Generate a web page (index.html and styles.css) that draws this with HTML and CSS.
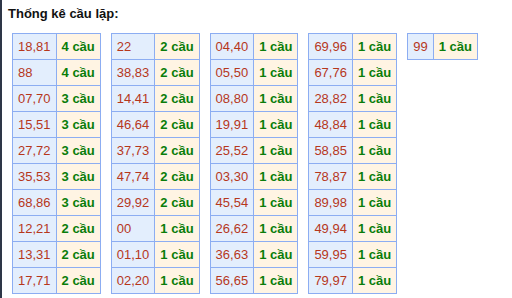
FILE: index.html
```html
<!DOCTYPE html>
<html lang="vi">
<head>
<meta charset="utf-8">
<title>Thống kê cầu lặp</title>
<link rel="stylesheet" href="styles.css">
</head>
<body>
<div class="page">
  <div class="title">Thống kê cầu lặp:</div>
  <div class="tables">
    <table class="st">
      <tr><td class="n">18,81</td><td class="c">4 cầu</td></tr>
      <tr><td class="n">88</td><td class="c">4 cầu</td></tr>
      <tr><td class="n">07,70</td><td class="c">3 cầu</td></tr>
      <tr><td class="n">15,51</td><td class="c">3 cầu</td></tr>
      <tr><td class="n">27,72</td><td class="c">3 cầu</td></tr>
      <tr><td class="n">35,53</td><td class="c">3 cầu</td></tr>
      <tr><td class="n">68,86</td><td class="c">3 cầu</td></tr>
      <tr><td class="n">12,21</td><td class="c">2 cầu</td></tr>
      <tr><td class="n">13,31</td><td class="c">2 cầu</td></tr>
      <tr><td class="n">17,71</td><td class="c">2 cầu</td></tr>
    </table>
    <table class="st">
      <tr><td class="n">22</td><td class="c">2 cầu</td></tr>
      <tr><td class="n">38,83</td><td class="c">2 cầu</td></tr>
      <tr><td class="n">14,41</td><td class="c">2 cầu</td></tr>
      <tr><td class="n">46,64</td><td class="c">2 cầu</td></tr>
      <tr><td class="n">37,73</td><td class="c">2 cầu</td></tr>
      <tr><td class="n">47,74</td><td class="c">2 cầu</td></tr>
      <tr><td class="n">29,92</td><td class="c">2 cầu</td></tr>
      <tr><td class="n">00</td><td class="c">1 cầu</td></tr>
      <tr><td class="n">01,10</td><td class="c">1 cầu</td></tr>
      <tr><td class="n">02,20</td><td class="c">1 cầu</td></tr>
    </table>
    <table class="st">
      <tr><td class="n">04,40</td><td class="c">1 cầu</td></tr>
      <tr><td class="n">05,50</td><td class="c">1 cầu</td></tr>
      <tr><td class="n">08,80</td><td class="c">1 cầu</td></tr>
      <tr><td class="n">19,91</td><td class="c">1 cầu</td></tr>
      <tr><td class="n">25,52</td><td class="c">1 cầu</td></tr>
      <tr><td class="n">03,30</td><td class="c">1 cầu</td></tr>
      <tr><td class="n">45,54</td><td class="c">1 cầu</td></tr>
      <tr><td class="n">26,62</td><td class="c">1 cầu</td></tr>
      <tr><td class="n">36,63</td><td class="c">1 cầu</td></tr>
      <tr><td class="n">56,65</td><td class="c">1 cầu</td></tr>
    </table>
    <table class="st">
      <tr><td class="n">69,96</td><td class="c">1 cầu</td></tr>
      <tr><td class="n">67,76</td><td class="c">1 cầu</td></tr>
      <tr><td class="n">28,82</td><td class="c">1 cầu</td></tr>
      <tr><td class="n">48,84</td><td class="c">1 cầu</td></tr>
      <tr><td class="n">58,85</td><td class="c">1 cầu</td></tr>
      <tr><td class="n">78,87</td><td class="c">1 cầu</td></tr>
      <tr><td class="n">89,98</td><td class="c">1 cầu</td></tr>
      <tr><td class="n">49,94</td><td class="c">1 cầu</td></tr>
      <tr><td class="n">59,95</td><td class="c">1 cầu</td></tr>
      <tr><td class="n">79,97</td><td class="c">1 cầu</td></tr>
    </table>
    <table class="st">
      <tr><td class="n">99</td><td class="c">1 cầu</td></tr>
    </table>
  </div>
</div>
</body>
</html>
```
FILE: styles.css
```css
html, body {
  margin: 0;
  padding: 0;
  background: #ffffff;
}
body {
  font-family: "Liberation Sans", Arial, sans-serif;
  font-size: 13px;
  color: #000;
}
.page {
  border-left: 2px solid #2e3647;
  min-height: 298px;
  box-sizing: border-box;
  padding: 6px 0 0 6px;
}
.title {
  font-weight: bold;
  font-size: 13px;
  line-height: 15px;
  color: #111;
}
.tables {
  display: flex;
  align-items: flex-start;
  gap: 10px;
  margin-top: 12px;
  padding-left: 4px;
}
.st {
  border-collapse: collapse;
}
.st td {
  border: 1px solid #8cadf2;
  padding: 5px 5px;
  line-height: 15px;
  white-space: nowrap;
}
.st .n {
  background: #e3eefd;
  color: #b6371c;
}
.st .c {
  background: #fff4e3;
  color: #0a7d0a;
  font-weight: bold;
}
```
